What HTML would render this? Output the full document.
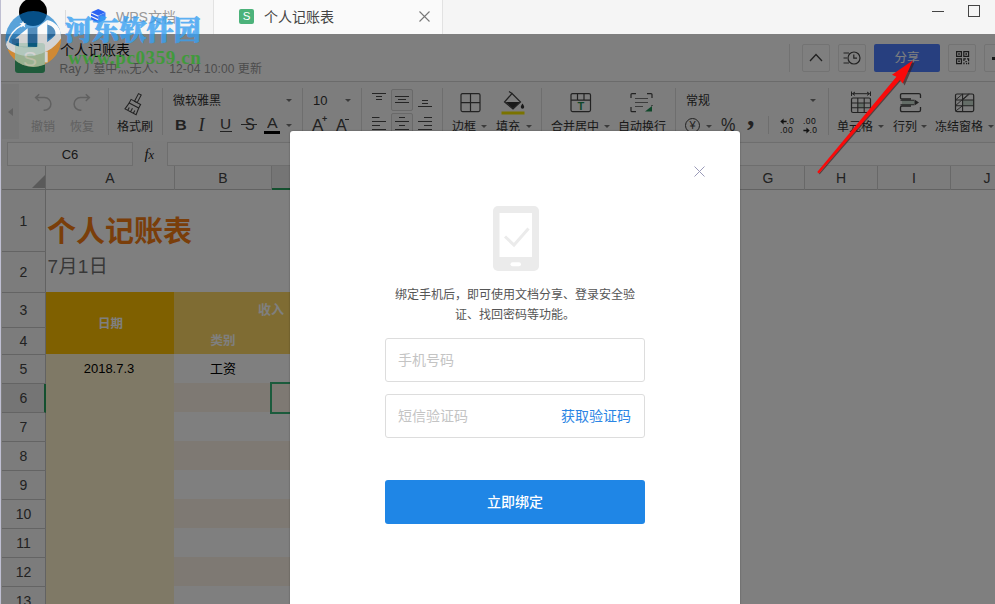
<!DOCTYPE html>
<html lang="zh-CN">
<head>
<meta charset="utf-8">
<title>个人记账表</title>
<style>
*{box-sizing:border-box;margin:0;padding:0}
html,body{width:995px;height:604px;overflow:hidden;background:#fff}
body{position:relative;font-family:"Liberation Sans","Noto Sans CJK SC",sans-serif;font-size:12px;color:#333}
.abs{position:absolute}
.t{position:absolute;white-space:nowrap;line-height:1}
#app{position:absolute;left:0;top:34px;width:995px;height:570px;background:#fff;overflow:hidden}
#dim{position:absolute;left:0;top:34px;width:995px;height:570px;background:rgba(0,0,0,.5)}
#tabs{position:absolute;left:0;top:0;width:995px;height:34px;background:#f5f5f5;border-left:1px solid #bcbccf}
.sep{position:absolute;width:1px;background:#dcdcdc}
.lbl{position:absolute;white-space:nowrap;line-height:1;font-size:12px;color:#333}
.dd{position:absolute;width:0;height:0;border-left:3px solid transparent;border-right:3px solid transparent;border-top:3.5px solid #777}
.rh{position:absolute;left:2px;width:43px;text-align:center;font-size:14px;color:#444;line-height:1}
.ch{position:absolute;top:0;height:22px;line-height:21px;text-align:center;font-size:14px;color:#444;border-right:1px solid #d0d0d0}
.hb{top:10px;width:28px;height:28px;border:1px solid #e6e6e6;border-radius:2px;background:#fff}
</style>
</head>
<body>

<!-- ===== app content (dimmed) ===== -->
<div id="app">
  <!-- header 0..48 (page y 33..81) -->
  <div class="abs" id="hdr" style="left:0;top:0;width:995px;height:48px;background:#fff;border-bottom:1px solid #d6d6d6">
    <div class="abs" style="left:15px;top:9px;width:30px;height:30px;border-radius:3px;background:#3fb777"></div>
    <div class="t" style="left:23px;top:14px;font-size:21px;color:#fff">S</div>
    <div class="t" style="left:60px;top:9px;font-size:14px;color:#111">个人记账表</div>
    <div class="t" style="left:59.5px;top:29px;font-size:12px;color:#999;letter-spacing:.1px">Ray丿墓中灬无人、 12-04 10:00 更新</div>
    <div class="abs" style="left:789px;top:10px;width:1px;height:28px;background:#e4e4e4"></div>
    <div class="abs hb" style="left:802px"></div>
    <svg class="abs" style="left:808px;top:17px" width="16" height="14" viewBox="0 0 16 14"><path d="M2 10 L8 3.5 L14 10" stroke="#444" stroke-width="1.3" fill="none"/></svg>
    <div class="abs hb" style="left:838px"></div>
    <svg class="abs" style="left:842px;top:14px" width="20" height="20" viewBox="0 0 20 20"><circle cx="12" cy="10" r="6" stroke="#444" stroke-width="1.2" fill="none"/><path d="M11.8 6.5 V10.2 H15 M1.5 5 H7 M1.5 10 H5 M1.5 15 H7" stroke="#444" stroke-width="1.2" fill="none"/></svg>
    <div class="abs" style="left:874px;top:10px;width:66px;height:28px;border-radius:2px;background:#4e7fff"></div>
    <div class="t" style="left:894.5px;top:18px;font-size:12.5px;color:#fff">分享</div>
    <div class="abs hb" style="left:948px"></div>
    <svg class="abs" style="left:955.5px;top:17px" width="14" height="14" viewBox="0 0 14 14"><path d="M0.6 0.6 H5.4 V5.4 H0.6 Z M7.8 0.6 H12.6 V5.4 H7.8 Z M0.6 7.8 H5.4 V12.6 H0.6 Z" stroke="#333" stroke-width="1.15" fill="none"/><path d="M2.2 2.2h1.6v1.6h-1.6z M9.4 2.2h1.6v1.6h-1.6z M2.2 9.4h1.6v1.6h-1.6z M7.3 7.3h2.6v1.2h-1.4v1.6h-1.2z M11 7.3h2.2v3h-1.2v-1.8h-1z M9.4 10h1.4v1.3h-1.4z M7.3 11.6h1.3v1.6h-1.3z M10 12h1.2v1.2h-1.2z M12 11.6h1.2v1.6h-1.2z" fill="#333"/></svg>
    <div class="abs hb" style="left:984px"></div>
    <div class="abs" style="left:992px;top:23px;width:3px;height:3px;background:#333"></div>
  </div>
  <!-- toolbar (page y 81..140) -->
  <div class="abs" id="tb" style="left:0;top:48px;width:995px;height:59px;background:#fafafa"></div>
  <!-- formula bar (page y 140..168) -->
  <div class="abs" id="fb" style="left:0;top:107px;width:995px;height:25px;background:#f9f9f9"></div>
  <!-- sheet (page y 168..) -->
  <div class="abs" id="sheet" style="left:0;top:132px;width:995px;height:438px;background:#fff"></div>
  <!-- page-coordinate container -->
  <div class="abs" id="pc" style="left:0;top:-34px;width:995px;height:604px">

    <!-- toolbar items (page coords) -->
    <div class="abs" style="left:2px;top:84px;width:17px;height:55px;background:#f0f0f0"></div>
    <div class="abs" style="left:8px;top:108px;width:0;height:0;border-top:4px solid transparent;border-bottom:4px solid transparent;border-right:5px solid #c4c4c4"></div>
    <svg class="abs" style="left:33px;top:92px" width="20" height="20" viewBox="0 0 20 20"><path d="M6.2 2.2 L2.6 5.6 L6.2 9 M2.8 5.6 H11.6 A6.3 6.3 0 0 1 11.6 18.2 H10.6" stroke="#c2c2c2" stroke-width="1.5" fill="none"/></svg>
    <div class="lbl" style="left:31px;top:121px;color:#c2c2c2">撤销</div>
    <svg class="abs" style="left:72px;top:92px" width="20" height="20" viewBox="0 0 20 20"><path d="M13.8 2.2 L17.4 5.6 L13.8 9 M17.2 5.6 H8.4 A6.3 6.3 0 0 0 8.4 18.2 H9.4" stroke="#c2c2c2" stroke-width="1.5" fill="none"/></svg>
    <div class="lbl" style="left:70px;top:121px;color:#c2c2c2">恢复</div>
    <div class="sep" style="left:108px;top:88px;height:47px"></div>
    <svg class="abs" style="left:123px;top:90px" width="24" height="26" viewBox="0 0 24 26"><g transform="translate(12 13.5) scale(.9) rotate(28) translate(-12 -13)" stroke="#444" stroke-width="1.2" fill="none"><path d="M10.3 1.5 H13.7 V11 H10.3 Z"/><path d="M6 11 H18 V15.5 H6 Z"/><path d="M6 15.5 L5 23.5 H19 L18 15.5 M8.5 23.5 V20 M12 23.5 V19 M15.5 23.5 V20"/></g></svg>
    <div class="lbl" style="left:117px;top:121px">格式刷</div>
    <div class="sep" style="left:162px;top:88px;height:47px"></div>
    <div class="lbl" style="left:173px;top:95px">微软雅黑</div>
    <div class="dd" style="left:286px;top:99px"></div>
    <div class="sep" style="left:302px;top:88px;height:47px"></div>
    <div class="lbl" style="left:313px;top:94px;font-size:13px">10</div>
    <div class="dd" style="left:345px;top:99px"></div>
    <div class="lbl" style="left:174.5px;top:118px;font-size:14.5px;font-weight:bold;color:#444;transform:scaleX(1.12);transform-origin:0 0">B</div>
    <div class="lbl" style="left:198.5px;top:116px;font-size:18px;font-style:italic;font-family:'Liberation Serif',serif;color:#444">I</div>
    <div class="lbl" style="left:220.3px;top:117px;font-size:14px;color:#444;transform:scaleX(1.1);transform-origin:0 0">U</div>
    <div class="abs" style="left:220px;top:131px;width:12px;height:1px;background:#444"></div>
    <div class="lbl" style="left:244.5px;top:115.5px;font-size:17px;color:#444;transform:scaleX(.86);transform-origin:0 0">S</div>
    <div class="abs" style="left:241px;top:124px;width:16px;height:1px;background:#444"></div>
    <div class="lbl" style="left:266.5px;top:116px;font-size:14px;color:#444;transform:scaleX(1.14);transform-origin:0 0">A</div>
    <div class="abs" style="left:264px;top:131px;width:16px;height:3px;background:#000"></div>
    <div class="dd" style="left:286px;top:124px"></div>
    <div class="lbl" style="left:312px;top:117px;font-size:17px;color:#444">A</div>
    <div class="lbl" style="left:322px;top:115px;font-size:9px;font-weight:bold;color:#444">+</div>
    <div class="lbl" style="left:336px;top:118px;font-size:16px;color:#444">A</div>
    <div class="abs" style="left:345px;top:119px;width:4px;height:1px;background:#444"></div>
    <div class="sep" style="left:361px;top:88px;height:47px"></div>
    <!-- align icons -->
    <div class="abs" style="left:391px;top:89px;width:22px;height:22px;border:1px solid #d2d2d2;border-radius:2px;background:#f4f4f4"></div>
    <div class="abs" style="left:391px;top:113px;width:22px;height:22px;border:1px solid #d2d2d2;border-radius:2px;background:#f4f4f4"></div>
    <svg class="abs" style="left:370px;top:88px" width="68" height="48" viewBox="0 0 68 48" stroke="#4a4a4a" stroke-width="1.15" fill="none">
      <path d="M2 5.5 H16 M6 8.5 H12 M6 11.5 H12"/>
      <path d="M25 8.5 H39 M28 11.5 H36 M25 14.5 H39"/>
      <path d="M52 12.5 H58 M52 15.5 H58 M48 18.5 H62"/>
      <path d="M2 29.5 H9.5 M2 33.5 H16 M2 37.5 H10 M2 41.5 H16"/>
      <path d="M29 29.5 H35 M25 33.5 H39 M29 37.5 H35 M25 41.5 H39"/>
      <path d="M54 29.5 H62 M48 33.5 H62 M54 37.5 H62 M48 41.5 H62"/>
    </svg>
    <div class="sep" style="left:442px;top:88px;height:47px"></div>
    <!-- border -->
    <svg class="abs" style="left:460px;top:92px" width="21" height="21" viewBox="0 0 21 21"><rect x="1" y="1.6" width="19" height="18" rx="1.5" stroke="#444" stroke-width="1.2" fill="none"/><path d="M10.5 1.6 V19.6 M1 10.6 H20" stroke="#444" stroke-width="1.2"/></svg>
    <div class="lbl" style="left:452px;top:121px">边框</div>
    <div class="dd" style="left:481px;top:125px"></div>
    <!-- fill -->
    <svg class="abs" style="left:500px;top:90px" width="26" height="26" viewBox="0 0 26 26"><path d="M12 3.5 L20.5 12 L13 19 L4.5 12 Z" stroke="#444" stroke-width="1.2" fill="none"/><path d="M5.5 12 H19.8 L13 18.5 Z" fill="#333"/><path d="M12 3.5 L9 1.5" stroke="#444" stroke-width="1.2"/><path d="M22.5 13.5 C23.5 15 24.2 16 24.2 17 A1.7 1.7 0 0 1 20.8 17 C20.8 16 21.5 15 22.5 13.5Z" fill="#333"/><rect x="1.5" y="21.5" width="23" height="3" fill="#f5e600"/></svg>
    <div class="lbl" style="left:496px;top:121px">填充</div>
    <div class="dd" style="left:526px;top:125px"></div>
    <div class="sep" style="left:541px;top:88px;height:47px"></div>
    <!-- merge -->
    <svg class="abs" style="left:570px;top:92px" width="22" height="21" viewBox="0 0 22 21"><rect x="1" y="1.6" width="19.5" height="18" rx="1.5" stroke="#444" stroke-width="1.2" fill="none"/><path d="M1 8.2 H20.5 M7.5 1.6 V8.2 M14 1.6 V8.2" stroke="#444" stroke-width="1.2"/><text x="10.75" y="17.6" text-anchor="middle" font-family="Liberation Sans, sans-serif" font-weight="bold" font-size="11" fill="#1f8f55">T</text></svg>
    <div class="lbl" style="left:551px;top:121px">合并居中</div>
    <div class="dd" style="left:604px;top:125px"></div>
    <!-- wrap -->
    <svg class="abs" style="left:630px;top:92px" width="24" height="21" viewBox="0 0 24 21"><path d="M1 6 V2.5 Q1 1.6 2 1.6 H6 M17 1.6 H21 Q22 1.6 22 2.5 V6 M1 15 V18.7 Q1 19.6 2 19.6 H6 M22 13 V14" stroke="#444" stroke-width="1.2" fill="none"/><path d="M5 6.5 H18 M5 10.5 H18 M5 14.5 H13" stroke="#777" stroke-width="1.1"/><path d="M15 19.6 H22 V14 L15 19.6Z" fill="#1f8f55"/></svg>
    <div class="lbl" style="left:618px;top:121px">自动换行</div>
    <div class="sep" style="left:675px;top:88px;height:47px"></div>
    <div class="lbl" style="left:686px;top:95px">常规</div>
    <div class="dd" style="left:810px;top:99px"></div>
    <div class="abs" style="left:685px;top:118px;width:15px;height:15px;border:1.1px solid #444;border-radius:50%"></div>
    <div class="lbl" style="left:685px;top:120.3px;width:15px;text-align:center;font-size:11px;color:#444">¥</div>
    <div class="dd" style="left:706px;top:125px"></div>
    <div class="lbl" style="left:720.5px;top:115.5px;font-size:18px;color:#444;transform:scaleX(.9);transform-origin:0 0">%</div>
    <div class="lbl" style="left:747px;top:99.5px;font-size:30px;font-weight:bold;color:#444;font-family:'Liberation Serif',serif">,</div>
    <div class="sep" style="left:768px;top:116px;height:18px"></div>
    <svg class="abs" style="left:779.5px;top:117.8px" width="7" height="7" viewBox="0 0 7 7"><path d="M0.3 3.5 L3.6 0.6 V2.8 H6.6 V4.2 H3.6 V6.4 Z" fill="#222"/></svg>
    <div class="lbl" style="left:786.5px;top:116.5px;font-size:8.5px;color:#222;letter-spacing:.5px">.0</div>
    <div class="lbl" style="left:780px;top:125.5px;font-size:8.5px;color:#222;letter-spacing:.5px">.00</div>
    <div class="lbl" style="left:803px;top:116.5px;font-size:8.5px;color:#222;letter-spacing:.5px">.00</div>
    <svg class="abs" style="left:802.5px;top:126.6px" width="7" height="7" viewBox="0 0 7 7"><path d="M6.7 3.5 L3.4 0.6 V2.8 H0.4 V4.2 H3.4 V6.4 Z" fill="#222"/></svg>
    <div class="lbl" style="left:809.5px;top:125.5px;font-size:8.5px;color:#222;letter-spacing:.5px">.0</div>
    <div class="sep" style="left:828px;top:88px;height:47px"></div>
    <!-- cell -->
    <svg class="abs" style="left:850px;top:90px" width="22" height="24" viewBox="0 0 22 24"><path d="M1.5 1.5 V6 M20.5 1.5 V6 M2.5 3.7 H19.5 M2.5 3.7 L5 2 M2.5 3.7 L5 5.4 M19.5 3.7 L17 2 M19.5 3.7 L17 5.4" stroke="#444" stroke-width="1" fill="none"/><rect x="1.5" y="8" width="19" height="14.5" rx="1.5" stroke="#444" stroke-width="1.2" fill="none"/><rect x="7.8" y="13" width="6.4" height="4.8" fill="#c8dacf"/><path d="M1.5 13 H20.5 M1.5 17.8 H20.5 M7.8 8 V22.5 M14.2 8 V22.5" stroke="#444" stroke-width="1.1"/></svg>
    <div class="lbl" style="left:837px;top:121px">单元格</div>
    <div class="dd" style="left:878px;top:125px"></div>
    <!-- rows/cols -->
    <svg class="abs" style="left:899px;top:92px" width="23" height="21" viewBox="0 0 23 21"><path d="M21.5 6 V3 Q21.5 1.6 20 1.6 H3 Q1.5 1.6 1.5 3 V5.5 Q1.5 7 3 7 H12 M21.5 15 V18 Q21.5 19.6 20 19.6 H3 Q1.5 19.6 1.5 18 V15.5 Q1.5 14 3 14 H12" stroke="#444" stroke-width="1.3" fill="none"/><rect x="3" y="8.3" width="12.5" height="4.4" fill="#c8dacf"/><path d="M1.5 8.3 H15 M1.5 12.7 H15" stroke="#444" stroke-width="1.1"/><path d="M15.5 7.5 L20 10.5 L15.5 13.5 Z" fill="#444"/></svg>
    <div class="lbl" style="left:893px;top:121px">行列</div>
    <div class="dd" style="left:921px;top:125px"></div>
    <!-- freeze -->
    <svg class="abs" style="left:954px;top:92px" width="21" height="21" viewBox="0 0 21 21"><rect x="8.6" y="8" width="11" height="5.7" fill="#c8dacf"/><rect x="1.5" y="2" width="18.2" height="17.6" rx="1.5" stroke="#444" stroke-width="1.2" fill="none"/><path d="M1.5 8 H19.7 M1.5 13.7 H19.7 M8.6 2 V19.6" stroke="#444" stroke-width="1.1"/><path d="M1.5 8 L8.6 2 M1.5 13.7 L14.5 2 M1.5 19.2 L8.6 13.7 M8.6 8 L15.5 2" stroke="#444" stroke-width="0.9"/></svg>
    <div class="lbl" style="left:935px;top:121px">冻结窗格</div>
    <div class="dd" style="left:988px;top:125px"></div>


    <!-- formula bar (page coords) -->
    <div class="abs" style="left:7px;top:142px;width:126px;height:24px;background:#fff;border:1px solid #dcdcdc"></div>
    <div class="lbl" style="left:7px;top:148px;width:126px;text-align:center;font-size:13px;color:#333">C6</div>
    <div class="lbl" style="left:144.5px;top:147px;font-size:14.5px;font-style:italic;font-family:'Liberation Serif',serif;color:#222">f<span style="font-size:12.5px;letter-spacing:0">x</span></div>
    <div class="abs" style="left:167px;top:142px;width:840px;height:24px;background:#fff;border:1px solid #dcdcdc"></div>


    <!-- sheet (page coords) -->
    <div class="abs" style="left:0;top:166px;width:2px;height:438px;background:#fff"></div>
    <div class="abs" style="left:2px;top:166px;width:993px;height:24px;background:#f8f8f8;border-bottom:1px solid #c4c4c4"></div>
    <div class="abs" style="left:2px;top:190px;width:44px;height:414px;background:#f8f8f8;border-right:1px solid #c4c4c4"></div>
    <div class="abs" style="left:45px;top:166px;width:1px;height:24px;background:#c4c4c4"></div>
    <div class="abs" style="left:32px;top:175px;width:0;height:0;border-left:13px solid transparent;border-bottom:13px solid #b5b5b5"></div>
    <div class="ch" style="left:46px;top:166px;width:129px;height:24px;line-height:24px;">A</div>
    <div class="ch" style="left:175px;top:166px;width:97px;height:24px;line-height:24px;">B</div>
    <div class="ch" style="left:272px;top:166px;width:73px;height:24px;line-height:24px;background:#ebebeb;border-bottom:2px solid #28a05e;">C</div>
    <div class="ch" style="left:732px;top:166px;width:73px;height:24px;line-height:24px;">G</div>
    <div class="ch" style="left:805px;top:166px;width:73px;height:24px;line-height:24px;">H</div>
    <div class="ch" style="left:878px;top:166px;width:73px;height:24px;line-height:24px;">I</div>
    <div class="ch" style="left:951px;top:166px;width:73px;height:24px;line-height:24px;">J</div>
    <div class="abs" style="left:2px;top:190px;width:44px;height:62px;border-bottom:1px solid #c9c9c9;"></div>
    <div class="rh" style="top:214px">1</div>
    <div class="abs" style="left:2px;top:252px;width:44px;height:41px;border-bottom:1px solid #c9c9c9;"></div>
    <div class="rh" style="top:265px">2</div>
    <div class="abs" style="left:2px;top:293px;width:44px;height:35px;border-bottom:1px solid #c9c9c9;"></div>
    <div class="rh" style="top:303px">3</div>
    <div class="abs" style="left:2px;top:328px;width:44px;height:27px;border-bottom:1px solid #c9c9c9;"></div>
    <div class="rh" style="top:334px">4</div>
    <div class="abs" style="left:2px;top:355px;width:44px;height:29px;border-bottom:1px solid #c9c9c9;"></div>
    <div class="rh" style="top:362px">5</div>
    <div class="abs" style="left:2px;top:384px;width:44px;height:29px;border-bottom:1px solid #c9c9c9;background:#ebebeb;border-right:2px solid #28a05e;"></div>
    <div class="rh" style="top:391px">6</div>
    <div class="abs" style="left:2px;top:413px;width:44px;height:29px;border-bottom:1px solid #c9c9c9;"></div>
    <div class="rh" style="top:420px">7</div>
    <div class="abs" style="left:2px;top:442px;width:44px;height:29px;border-bottom:1px solid #c9c9c9;"></div>
    <div class="rh" style="top:449px">8</div>
    <div class="abs" style="left:2px;top:471px;width:44px;height:29px;border-bottom:1px solid #c9c9c9;"></div>
    <div class="rh" style="top:478px">9</div>
    <div class="abs" style="left:2px;top:500px;width:44px;height:29px;border-bottom:1px solid #c9c9c9;"></div>
    <div class="rh" style="top:507px">10</div>
    <div class="abs" style="left:2px;top:529px;width:44px;height:29px;border-bottom:1px solid #c9c9c9;"></div>
    <div class="rh" style="top:536px">11</div>
    <div class="abs" style="left:2px;top:558px;width:44px;height:29px;border-bottom:1px solid #c9c9c9;"></div>
    <div class="rh" style="top:565px">12</div>
    <div class="abs" style="left:2px;top:587px;width:44px;height:29px;border-bottom:1px solid #c9c9c9;"></div>
    <div class="rh" style="top:594px">13</div>
    <div class="t" style="left:47px;top:218px;font-size:29px;font-weight:bold;color:#f47d14">个人记账表</div>
    <div class="t" style="left:47.5px;top:257px;font-size:19px;color:#707070;letter-spacing:.4px">7月1日</div>
    <div class="abs" style="left:46px;top:292px;width:128px;height:62px;background:#ffc000"></div>
    <div class="abs" style="left:174px;top:292px;width:201px;height:62px;background:#ffd966"></div>
    <div class="t" style="left:46px;top:318px;width:129px;text-align:center;font-size:12.5px;font-weight:bold;color:#fff">日期</div>
    <div class="t" style="left:175px;top:335px;width:96px;text-align:center;font-size:12.5px;font-weight:bold;color:#fff">类别</div>
    <div class="t" style="left:258px;top:303px;font-size:13px;font-weight:bold;color:#fff">收入</div>
    <div class="abs" style="left:46px;top:354px;width:128px;height:260px;background:#fff2cc"></div>
    <div class="t" style="left:44.5px;top:362px;width:129px;text-align:center;font-size:13px;color:#000">2018.7.3</div>
    <div class="t" style="left:175px;top:362px;width:96px;text-align:center;font-size:13px;color:#000">工资</div>
    <div class="abs" style="left:174px;top:383px;width:201px;height:29px;background:#fdf3e6"></div>
    <div class="abs" style="left:174px;top:441px;width:201px;height:29px;background:#fdf3e6"></div>
    <div class="abs" style="left:174px;top:499px;width:201px;height:29px;background:#fdf3e6"></div>
    <div class="abs" style="left:174px;top:557px;width:201px;height:29px;background:#fdf3e6"></div>
    <div class="abs" style="left:270px;top:382px;width:76px;height:32px;border:2px solid #36b678"></div>

  </div>
</div>
<div id="dim"></div>

<!-- ===== modal ===== -->
<div class="abs" id="modal" style="left:290px;top:131px;width:450px;height:480px;background:#fff;border-radius:3px 3px 0 0;box-shadow:0 0 2px rgba(0,0,0,.35)">
  <svg class="abs" style="left:404px;top:35px" width="11" height="11" viewBox="0 0 11 11"><path d="M0.5 0.5 L10.5 10.5 M10.5 0.5 L0.5 10.5" stroke="#9a9ab8" stroke-width="1" fill="none"/></svg>
  <svg class="abs" style="left:203px;top:75px" width="46" height="65" viewBox="0 0 46 65"><rect x="0" y="0" width="46" height="65" rx="5" fill="#ebebeb"/><rect x="6.5" y="7" width="32.5" height="44" fill="#fff"/><rect x="17.5" y="56.3" width="10.5" height="4" rx="2" fill="#fff"/><path d="M12 30.5 L21 39 L35.5 22.5" stroke="#ebebeb" stroke-width="3" fill="none"/></svg>
  <div class="abs" style="left:95px;top:154px;width:260px;text-align:center;font-size:12px;line-height:20px;color:#555">绑定手机后，即可使用文档分享、登录安全验<br>证、找回密码等功能。</div>
  <div class="abs" style="left:95px;top:207px;width:260px;height:44px;border:1px solid #ddd;border-radius:3px"></div>
  <div class="t" style="left:108px;top:222px;font-size:14px;color:#c4c4c4">手机号码</div>
  <div class="abs" style="left:95px;top:263px;width:260px;height:44px;border:1px solid #ddd;border-radius:3px"></div>
  <div class="t" style="left:108px;top:278px;font-size:14px;color:#c4c4c4">短信验证码</div>
  <div class="t" style="left:271px;top:278px;font-size:14px;color:#2b85e4">获取验证码</div>
  <div class="abs" style="left:95px;top:349px;width:260px;height:44px;border-radius:3px;background:#1f86e6"></div>
  <div class="t" style="left:95px;top:364px;width:260px;text-align:center;font-size:14px;font-weight:500;color:#fff">立即绑定</div>
</div>

<!-- ===== tab bar ===== -->
<div id="tabs">
  <div class="abs" style="left:18px;top:-2px;width:28px;height:28px;border-radius:50%;background:#000"></div>
  <div class="abs" style="left:64px;top:10px;width:1px;height:16px;background:#dcdcdc"></div>
  <svg class="abs" style="left:90px;top:8.8px" width="15" height="15" viewBox="0 0 15 15">
    <path d="M7.2 6.8 L14.5 3.5 V10.6 L7.2 14 Z" fill="#3b7df8"/>
    <path d="M7.2 0 L14.5 3.2 L7.2 6.5 L0 3.2 Z" fill="#2b62f3"/>
    <path d="M0 4.5 L7.2 7.8 V10.1 L0 6.8 Z" fill="#2b62f3"/>
    <path d="M0 8.1 L7.2 11.4 V14 L0 10.6 Z" fill="#2b62f3"/>
  </svg>
  <div class="t" style="left:115px;top:10px;font-size:14px;color:#999">WPS文档</div>
  <div class="abs" style="left:212px;top:0;width:230px;height:34px;background:#fafafa;border-left:1px solid #e2e2e2;border-right:1px solid #e2e2e2"></div>
  <div class="abs" style="left:238px;top:9px;width:15px;height:15px;border-radius:2px;background:#4cb27a;color:#fff;font-size:11.5px;line-height:15px;text-align:center">S</div>
  <div class="t" style="left:263px;top:10px;font-size:14px;color:#444">个人记账表</div>
  <svg class="abs" style="left:418px;top:11px" width="11" height="11" viewBox="0 0 11 11"><path d="M0.5 0.5 L10.5 10.5 M10.5 0.5 L0.5 10.5" stroke="#777" stroke-width="1.1" fill="none"/></svg>
  <div class="abs" style="left:931px;top:11px;width:12px;height:1px;background:#444"></div>
  <div class="abs" style="left:967px;top:5px;width:12px;height:12px;border:1px solid #444"></div>
</div>


<div class="abs" style="left:0;top:0;width:1px;height:604px;background:#bfbfd2"></div>

<!-- ===== watermark ===== -->
<div class="abs" id="wm" style="left:0;top:0;width:220px;height:80px;pointer-events:none">
  <svg class="abs" style="left:2px;top:8px;opacity:.66" width="64" height="62" viewBox="0 0 623 604">
    <defs><clipPath id="lc"><circle cx="305" cy="302" r="272"/></clipPath></defs>
    <g clip-path="url(#lc)">
      <rect x="0" y="0" width="623" height="604" fill="#0a78cc"/>
      <path d="M30 380 C150 480 420 470 600 250 L640 640 L-10 640 Z" fill="#fb8f0d"/>
      <rect x="126" y="345" width="292" height="240" rx="22" fill="#d4ecdc" opacity=".85"/>
      <path d="M92 300 L165 297 L165 374 L100 360 Z" fill="#0058a0"/>
      <path d="M250 200 L345 186 L345 380 L250 378 Z" fill="#0058a0"/>
      <path d="M445 160 C500 175 528 215 520 262 L445 305 Z" fill="#0058a0"/>
      <path d="M128 296 L250 198 L250 378 L165 374 L165 298 Z" fill="#fff"/>
      <path d="M345 190 L440 118 L440 350 L345 382 Z" fill="#fff"/>
      <path d="M440 118 C520 135 575 195 566 262 L520 262 C528 215 500 175 440 160 Z" fill="#fff"/>
      <path d="M205 160 C130 200 72 262 56 340" stroke="#fff" stroke-width="14" fill="none"/>
      <path d="M205 122 L214 146 L240 148 L220 164 L227 190 L205 175 L183 190 L190 164 L170 148 L196 146 Z" fill="#fff"/>
      <path d="M48 318 C70 338 110 358 160 375 C200 384 300 388 345 378 C400 360 470 318 520 262 L566 200 L590 270 C560 330 500 390 440 420 C400 440 370 450 345 455 C300 468 250 470 200 462 C150 452 100 432 60 400 L36 365 Z" fill="#fff"/>
      <rect x="415" y="425" width="30" height="105" fill="#fff"/>
    </g>
  </svg>
  <div class="t" style="left:65px;top:18px;font-size:27px;font-weight:900;font-family:'Liberation Serif','Noto Serif CJK SC',serif;color:#37a0f2;-webkit-text-stroke:.8px #37a0f2;opacity:.8;letter-spacing:0.2px">河东软件园</div>
  <div class="t" style="left:68px;top:48px;font-size:19px;font-weight:bold;font-family:'Liberation Serif',serif;color:#3a9d35;opacity:.9;letter-spacing:.6px">www.pc0359.cn</div>
</div>

<!-- ===== red arrow ===== -->
<svg class="abs" id="arrow" style="left:800px;top:40px" width="140" height="140" viewBox="800 40 140 140">
  <path d="M819.6 174.6 L901.5 80 L904.6 85.4 L914.6 62.4 L912 62 L819 173.6 Z" fill="#3a1a1a" opacity=".6"/>
  <path d="M817.2 172 L896.4 76.8 L892 74.8 L913 60.2 L902.6 83.4 L900 79.8 L818.9 173.4 Z" fill="#fa0a0a"/>
</svg>
</body>
</html>
